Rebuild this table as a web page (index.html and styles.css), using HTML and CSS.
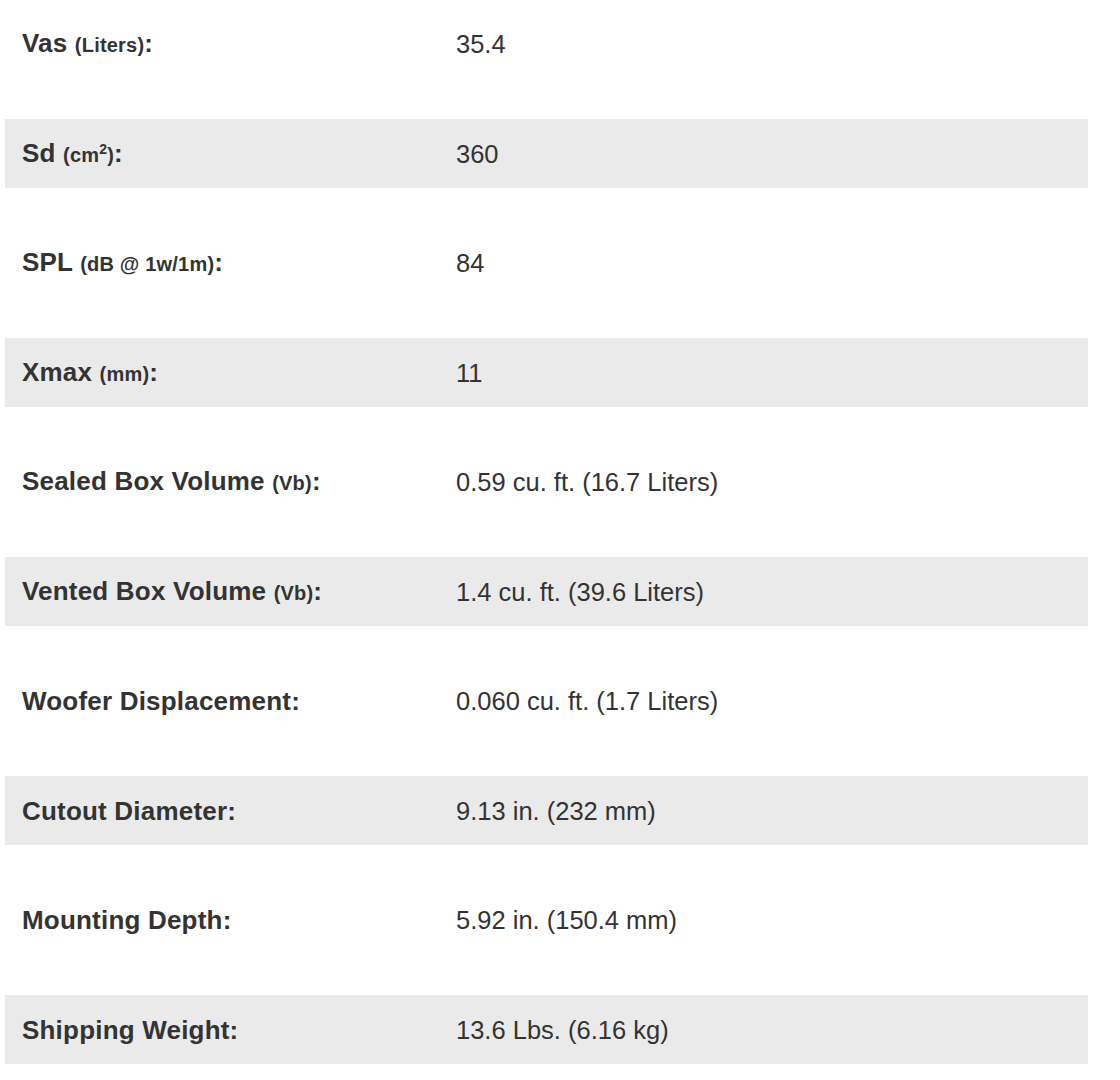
FILE: index.html
```html
<!DOCTYPE html>
<html lang="en">
<head>
<meta charset="utf-8">
<title>Specifications</title>
<link rel="stylesheet" href="styles.css">
</head>
<body>
<div class="spec-table">
  <div class="spec-row spec-row--tall">
    <div class="spec-label">Vas <span class="unit">(Liters)</span>:</div>
    <div class="spec-value">35.4</div>
  </div>
  <div class="spec-row spec-row--shaded">
    <div class="spec-label">Sd <span class="unit">(cm<sup>2</sup>)</span>:</div>
    <div class="spec-value">360</div>
  </div>
  <div class="spec-row spec-row--tall">
    <div class="spec-label">SPL <span class="unit">(dB @ 1w/1m)</span>:</div>
    <div class="spec-value">84</div>
  </div>
  <div class="spec-row spec-row--shaded">
    <div class="spec-label">Xmax <span class="unit">(mm)</span>:</div>
    <div class="spec-value">11</div>
  </div>
  <div class="spec-row spec-row--tall">
    <div class="spec-label">Sealed Box Volume <span class="unit">(Vb)</span>:</div>
    <div class="spec-value">0.59 cu. ft. (16.7 Liters)</div>
  </div>
  <div class="spec-row spec-row--shaded">
    <div class="spec-label">Vented Box Volume <span class="unit">(Vb)</span>:</div>
    <div class="spec-value">1.4 cu. ft. (39.6 Liters)</div>
  </div>
  <div class="spec-row spec-row--tall">
    <div class="spec-label">Woofer Displacement:</div>
    <div class="spec-value">0.060 cu. ft. (1.7 Liters)</div>
  </div>
  <div class="spec-row spec-row--shaded">
    <div class="spec-label">Cutout Diameter:</div>
    <div class="spec-value">9.13 in. (232 mm)</div>
  </div>
  <div class="spec-row spec-row--tall">
    <div class="spec-label">Mounting Depth:</div>
    <div class="spec-value">5.92 in. (150.4 mm)</div>
  </div>
  <div class="spec-row spec-row--shaded">
    <div class="spec-label">Shipping Weight:</div>
    <div class="spec-value">13.6 Lbs. (6.16 kg)</div>
  </div>
</div>
</body>
</html>
```
FILE: styles.css
```css
html, body {
  margin: 0;
  padding: 0;
  background: #ffffff;
}

body {
  font-family: "Liberation Sans", Arial, sans-serif;
  color: #333333;
  overflow: hidden;
}

.spec-table {
  width: 1083px;
  margin: -31px 0 0 5px;
  display: flex;
  flex-direction: column;
}

.spec-row {
  display: grid;
  grid-template-columns: 451px 1fr;
  align-items: center;
}

.spec-row--tall {
  height: 150px;
}

.spec-row--shaded {
  height: 69px;
  background: #eaeaea;
}

.spec-label {
  padding-left: 17px;
  font-size: 26px;
  font-weight: bold;
  line-height: 30px;
  letter-spacing: 0.2px;
}

.unit {
  font-size: 20px;
}

.unit sup {
  font-size: 14px;
  line-height: 0;
  vertical-align: 8px;
}

.spec-value {
  font-size: 25.5px;
  line-height: 30px;
}
```
